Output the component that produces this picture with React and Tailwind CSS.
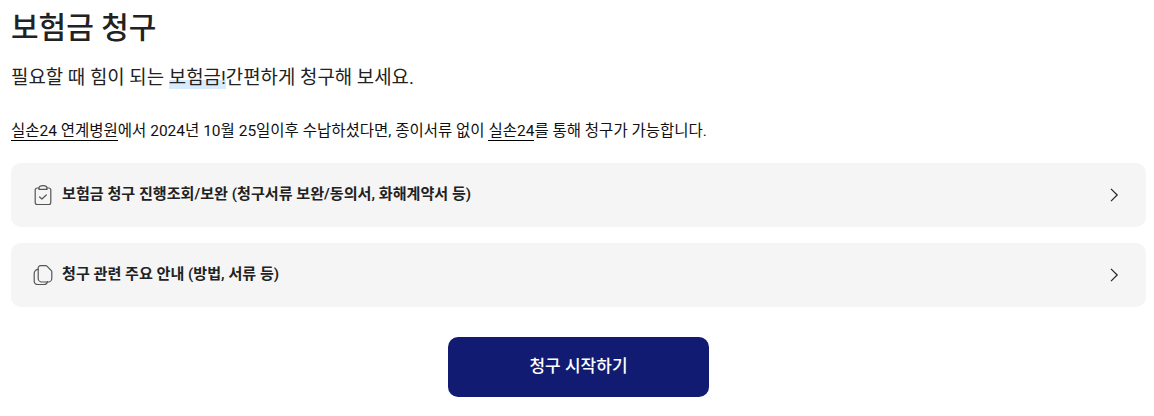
import React from 'react';

const ClipboardCheck = () => (
  <svg width="20" height="20" viewBox="0 0 20 20" fill="none" stroke="#555" strokeWidth="1.2" strokeLinecap="round" strokeLinejoin="round">
    <path d="M6 3H4.2a2 2 0 0 0-2 2v12.6a2 2 0 0 0 2 2h11.6a2 2 0 0 0 2-2V5a2 2 0 0 0-2-2H14" />
    <path d="M6 4.4V3.2C6 1.6 7.6.6 10 .6s4 1 4 2.6v1.2z" />
    <path d="M6.6 12l2.3 2 4.4-4" />
  </svg>
);

const Documents = () => (
  <svg width="20" height="20" viewBox="0 0 20 20" fill="none" stroke="#555" strokeWidth="1.2" strokeLinecap="round" strokeLinejoin="round">
    <path d="M5.2 4V3a2.4 2.4 0 0 1 2.4-2.4h5.2c.4 0 .8.2 1.1.5l4.4 4.6c.3.3.5.7.5 1.1v6.6a3.6 3.6 0 0 1-3.6 3.6H8.8a3.6 3.6 0 0 1-3.6-3.6z" />
    <path d="M5.2 4.4a4 4 0 0 0-4 4v7.8a3.4 3.4 0 0 0 3.4 3.4h6.6a3.4 3.4 0 0 0 3.2-3" />
  </svg>
);

const Chevron = () => (
  <svg width="20" height="20" viewBox="0 0 20 20" fill="none" stroke="#222" strokeWidth="1.2">
    <path d="M7 3.8l6.2 6.2-6.2 6.2" />
  </svg>
);

const Row = ({ icon, children }) => (
  <a className="flex h-16 items-center justify-between rounded-[10px] bg-[#f5f5f5] pl-[22px] pr-[22px]">
    <span className="flex items-center gap-[9px]">
      {icon}
      <span className="-translate-y-px text-[15.1px] font-semibold text-[#222]">{children}</span>
    </span>
    <Chevron />
  </a>
);

export default function App() {
  return (
    <div className="bg-white px-[11px] pr-2 text-[#222] font-['Roboto','Noto_Sans_CJK_KR',sans-serif]">
      <h1 className="pt-[6px] text-[30px] font-medium leading-[44px]">보험금 청구</h1>
      <p className="mt-[13px] text-[18.9px] leading-[29px]">
        필요할 때 힘이 되는 <span className="bg-[linear-gradient(transparent_60%,#d8eafd_60%)]">보험금!</span>간편하게 청구해 보세요.
      </p>
      <p className="mt-[28px] text-[15.5px] leading-[23px] text-[#111]">
        <span className="border-b-[1.5px] border-black">실손24 연계병원</span>에서 2024년 10월 25일이후 수납하셨다면, 종이서류 없이{' '}
        <span className="border-b-[1.5px] border-black">실손24</span>를 통해 청구가 가능합니다.
      </p>
      <div className="mt-5 flex flex-col gap-4">
        <Row icon={<ClipboardCheck />}>보험금 청구 진행조회/보완 (청구서류 보완/동의서, 화해계약서 등)</Row>
        <Row icon={<Documents />}>청구 관련 주요 안내 (방법, 서류 등)</Row>
      </div>
      <div className="mt-[30px] flex justify-center pb-[19px]">
        <button className="h-[60px] w-[261px] rounded-[10px] bg-[#111b72] text-[17px] font-medium text-white">
          청구 시작하기
        </button>
      </div>
    </div>
  );
}
